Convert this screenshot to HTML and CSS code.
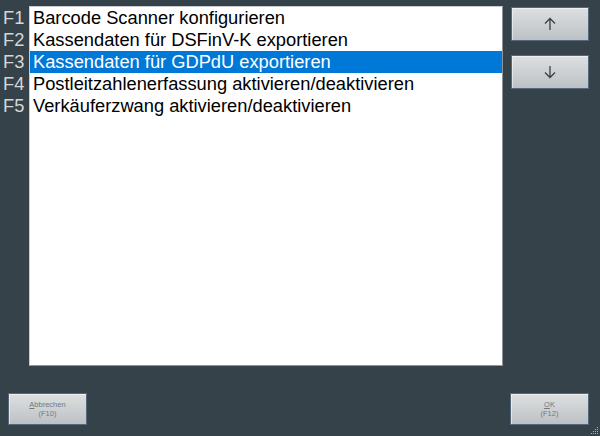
FILE: index.html
```html
<!DOCTYPE html>
<html lang="de">
<head>
  <meta charset="UTF-8" />
  <title>Funktionen</title>
  <link rel="stylesheet" href="styles.css">
</head>
<body>
  <div class="dialog">
    <div class="main-area">
      <div class="fkey-column">
        <div class="fkey">F1</div>
        <div class="fkey">F2</div>
        <div class="fkey">F3</div>
        <div class="fkey">F4</div>
        <div class="fkey">F5</div>
      </div>

      <div class="list-box">
        <div class="list-item">Barcode Scanner konfigurieren</div>
        <div class="list-item">Kassendaten für DSFinV-K exportieren</div>
        <div class="list-item selected">Kassendaten für GDPdU exportieren</div>
        <div class="list-item">Postleitzahlenerfassung aktivieren/deaktivieren</div>
        <div class="list-item">Verkäuferzwang aktivieren/deaktivieren</div>
      </div>

      <div class="nav-column">
        <button class="btn nav-btn" type="button">
          <svg width="14" height="14" viewBox="0 0 14 14">
            <path d="M7 13V1.5M2 6.5L7 1.5L12 6.5" fill="none" stroke="#3c4044" stroke-width="1.3"/>
          </svg>
        </button>
        <button class="btn nav-btn" type="button">
          <svg width="14" height="14" viewBox="0 0 14 14">
            <path d="M7 1V12.5M2 7.5L7 12.5L12 7.5" fill="none" stroke="#3c4044" stroke-width="1.3"/>
          </svg>
        </button>
      </div>
    </div>

    <div class="footer">
      <button class="btn footer-btn" type="button"><span><u>A</u>bbrechen</span><span>(F10)</span></button>
      <button class="btn footer-btn" type="button"><span><u>O</u>K</span><span>(F12)</span></button>
    </div>

    <svg class="grip" width="8" height="8" viewBox="0 0 8 8">
      <rect x="6" y="0" width="1" height="1" fill="#aab2b8"/>
      <rect x="4" y="2" width="1" height="1" fill="#aab2b8"/>
      <rect x="6" y="2" width="1" height="1" fill="#aab2b8"/>
      <rect x="2" y="4" width="1" height="1" fill="#aab2b8"/>
      <rect x="4" y="4" width="1" height="1" fill="#aab2b8"/>
      <rect x="6" y="4" width="1" height="1" fill="#aab2b8"/>
      <rect x="0" y="6" width="1" height="1" fill="#aab2b8"/>
      <rect x="2" y="6" width="1" height="1" fill="#aab2b8"/>
      <rect x="4" y="6" width="1" height="1" fill="#aab2b8"/>
      <rect x="6" y="6" width="1" height="1" fill="#aab2b8"/>
    </svg>
  </div>
</body>
</html>
```

FILE: styles.css
```css
:root {
  --bg-dark: #36424a;
  --fkey-grey: #d4d6d8;
  --select-blue: #0078d7;
  --btn-border: #55697a;
  --btn-top: #dde0e1;
  --btn-bottom: #bcc1c4;
  --font-stack: "Liberation Sans", Arial, sans-serif;
}

body {
  margin: 0;
  width: 600px;
  height: 436px;
  background-color: var(--bg-dark);
  font-family: var(--font-stack);
  overflow: hidden;
}

.dialog {
  position: relative;
  height: 436px;
  display: flex;
  flex-direction: column;
  justify-content: space-between;
  box-sizing: border-box;
  padding: 6px 0 11px 0;
}

.main-area {
  display: flex;
  align-items: flex-start;
}

.fkey-column {
  width: 29px;
  padding-top: 1px;
  display: flex;
  flex-direction: column;
}

.fkey {
  height: 22px;
  line-height: 22px;
  font-size: 18.3px;
  color: var(--fkey-grey);
  padding-left: 3px;
}

.list-box {
  width: 472px;
  height: 358px;
  background-color: #ffffff;
  border: 1px solid #c8ccd0;
  border-right-color: #8d959b;
  border-bottom-color: #8d959b;
}

.list-item {
  height: 22px;
  line-height: 22px;
  font-size: 18.3px;
  color: #000000;
  padding-left: 3px;
  white-space: nowrap;
}

.list-item.selected {
  background-color: var(--select-blue);
  color: #ffffff;
}

.nav-column {
  margin-left: 8px;
  padding-top: 1px;
  display: flex;
  flex-direction: column;
  gap: 14px;
}

.btn {
  margin: 0;
  padding: 0;
  border: 1px solid var(--btn-border);
  border-radius: 0;
  background: linear-gradient(to bottom, var(--btn-top), var(--btn-bottom));
  font-family: var(--font-stack);
  box-shadow: inset 1px 1px 0 rgba(255, 255, 255, 0.5);
}

.nav-btn {
  width: 78px;
  height: 34px;
  display: flex;
  justify-content: center;
  align-items: center;
}

.footer {
  display: flex;
  justify-content: space-between;
  padding: 0 11px 0 8px;
}

.footer-btn {
  width: 79px;
  height: 32px;
  display: flex;
  flex-direction: column;
  justify-content: center;
  align-items: center;
  font-size: 7.5px;
  line-height: 9px;
  color: #74787c;
}

.footer-btn u {
  text-decoration-thickness: 1px;
}

.grip {
  position: absolute;
  right: 1px;
  bottom: 1px;
}
```
